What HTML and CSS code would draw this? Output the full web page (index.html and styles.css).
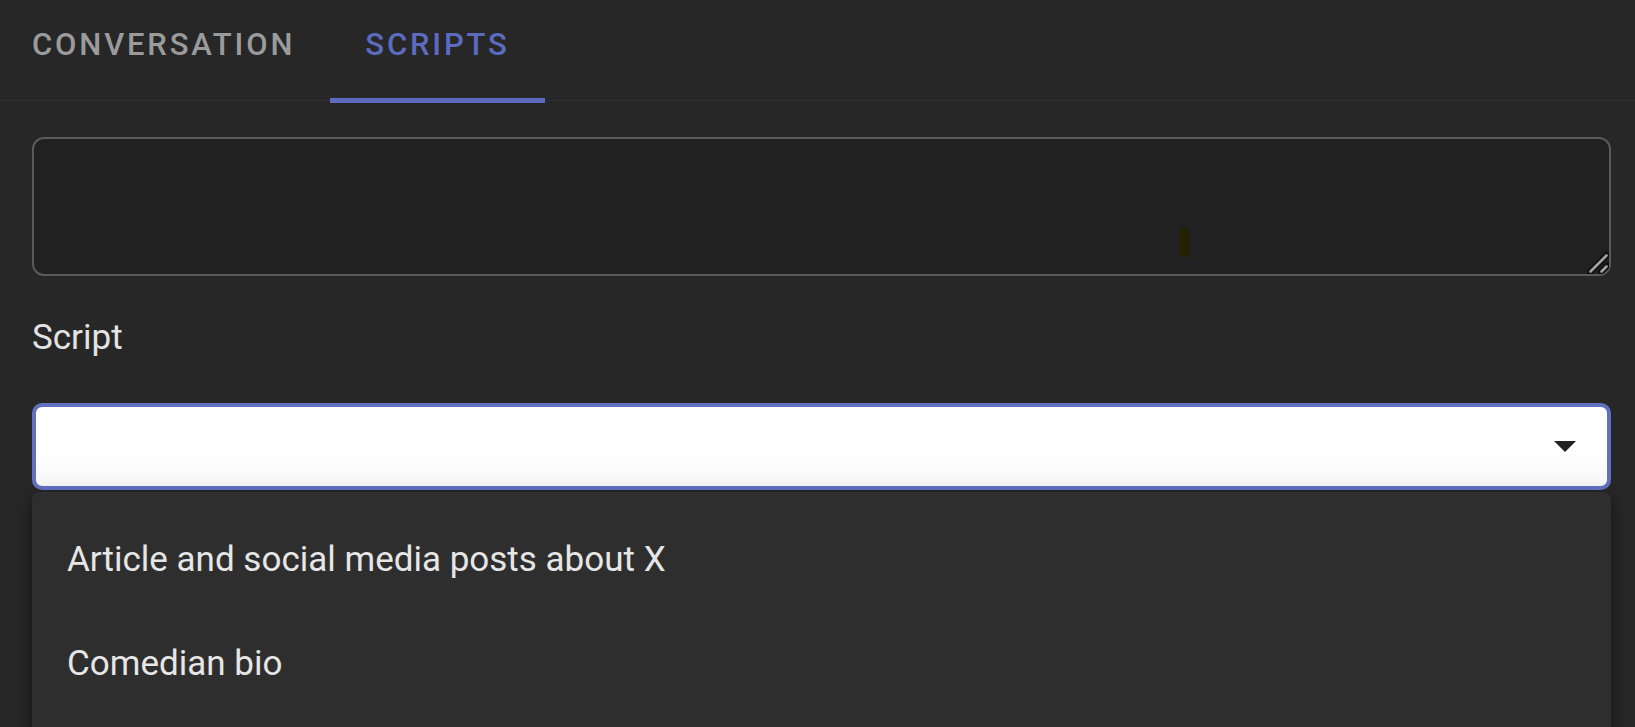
FILE: index.html
```html
<!DOCTYPE html>
<html lang="en">
<head>
<meta charset="utf-8">
<title>Scripts</title>
<link rel="stylesheet" href="styles.css">
</head>
<body>
<div class="tabs">
  <div class="tab tab-first">Conversation</div>
  <div class="tab tab-active">Scripts<span class="indicator"></span></div>
</div>
<main class="panel">
  <div class="textarea-wrap">
    <textarea class="textarea"></textarea>
    <span class="caret-mark"></span>
    <svg class="grip" width="22" height="22" viewBox="0 0 22 22">
      <path d="M3 20 L20 3 M14 20 L20 14" stroke="#0e0e0e" stroke-width="6" stroke-linecap="round" fill="none"/>
      <path d="M3.5 19.5 L19.5 3.5 M14.5 19.5 L19.5 14.5" stroke="#a3a3a3" stroke-width="2.6" stroke-linecap="round" fill="none"/>
    </svg>
  </div>
  <label class="field-label">Script</label>
  <div class="select-wrap">
    <div class="select">
      <svg class="select-arrow" width="22" height="11" viewBox="0 0 22 11"><path d="M0 0 L22 0 L11 11 Z" fill="#222222"/></svg>
    </div>
    <ul class="menu">
      <li class="menu-item">Article and social media posts about X</li>
      <li class="menu-item">Comedian bio</li>
    </ul>
  </div>
</main>
</body>
</html>
```
FILE: styles.css
```css
html, body {
  margin: 0;
  padding: 0;
  height: 100%;
  overflow: hidden;
}
body {
  background: #272727;
  font-family: Roboto, "Liberation Sans", sans-serif;
  color: #e4e4e4;
}
.tabs {
  display: flex;
  height: 100px;
  border-bottom: 1px solid #2f2f2f;
}
.tab {
  position: relative;
  box-sizing: border-box;
  padding: 27px 36px 0;
  font-size: 31px;
  line-height: 36px;
  font-weight: 500;
  letter-spacing: 2.85px;
  text-transform: uppercase;
  color: #9b9b9b;
  white-space: nowrap;
}
.tab-first {
  width: 330px;
  padding-left: 32px;
}
.tab-active {
  width: 215px;
  text-align: center;
  color: #5c6bc0;
  padding-left: 34px;
  padding-right: 34px;
}
.indicator {
  position: absolute;
  left: 0;
  right: 0;
  top: 98px;
  height: 4.5px;
  background: #5c6bc0;
}
.panel {
  padding: 36px 24px 0 32px;
}
.textarea-wrap {
  position: relative;
}
.textarea {
  display: block;
  box-sizing: border-box;
  width: 100%;
  height: 139px;
  margin: 0;
  background: #212121;
  border: 2px solid #5a5a5a;
  border-radius: 12px;
  color-scheme: dark;
  resize: none;
  outline: none;
}
.caret-mark {
  position: absolute;
  left: 1148px;
  top: 91px;
  width: 9px;
  height: 29px;
  background: #242100;
}
.grip {
  position: absolute;
  right: 2px;
  bottom: 2px;
}
.field-label {
  display: block;
  margin-top: 41px;
  font-size: 35px;
  line-height: 42px;
  color: #e3e3e3;
}
.select-wrap {
  position: relative;
  margin-top: 44px;
}
.select {
  box-sizing: border-box;
  height: 87px;
  border: 4px solid #6270c0;
  border-radius: 10px;
  background: linear-gradient(to bottom, #ffffff 60%, #f6f6f6 100%);
  display: flex;
  align-items: center;
  justify-content: flex-end;
  padding-right: 31px;
}
.select-arrow {
  display: block;
}
.menu {
  position: absolute;
  left: 0;
  right: 0;
  top: 89px;
  margin: 0;
  padding: 16px 0 40px;
  list-style: none;
  background: #2e2e2e;
  border-radius: 8px;
  box-shadow: 0 5px 6px -3px rgba(0,0,0,0.25), 0 8px 12px 1px rgba(0,0,0,0.18), 0 3px 16px 2px rgba(0,0,0,0.15);
}
.menu-item {
  height: 104px;
  display: flex;
  align-items: center;
  padding: 0 35px;
  font-size: 35px;
  line-height: 52.5px;
  color: #e6e6e6;
}
```
